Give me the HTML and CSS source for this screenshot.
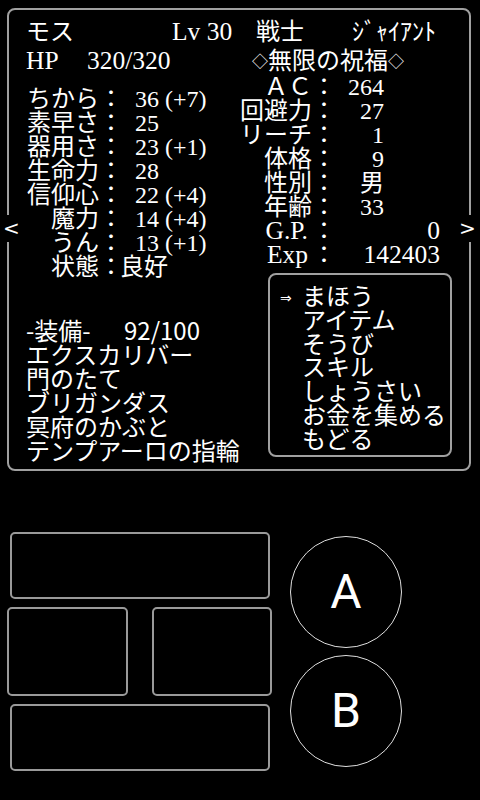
FILE: index.html
```html
<!DOCTYPE html>
<html lang="ja">
<head>
  <meta charset="UTF-8" />
  <title>ステータス</title>
  <link rel="stylesheet" href="styles.css">
</head>
<body>
  <div class="panel">
    <div class="row head1">
      <span class="name">モス</span><span class="lv big">Lv 30</span><span class="job">戦士</span><span>ｼﾞｬｲｱﾝﾄ</span>
    </div>
    <div class="row head2">
      <span class="hp-label big">HP</span><span class="hp-val big">320/320</span><span class="bless"><span class="dia">◇</span>無限の祝福<span class="dia">◇</span></span>
    </div>

    <div class="body">
      <div class="left">
        <div class="stats">
          <span class="k">ちから</span><span class="c">：</span><span class="v">36 (+7)</span>
          <span class="k">素早さ</span><span class="c">：</span><span class="v">25</span>
          <span class="k">器用さ</span><span class="c">：</span><span class="v">23 (+1)</span>
          <span class="k">生命力</span><span class="c">：</span><span class="v">28</span>
          <span class="k">信仰心</span><span class="c">：</span><span class="v">22 (+4)</span>
          <span class="k">魔力</span><span class="c">：</span><span class="v">14 (+4)</span>
          <span class="k">うん</span><span class="c">：</span><span class="v">13 (+1)</span>
          <span class="k">状態</span><span class="c">：</span><span class="v word">良好</span>
        </div>

        <div class="equip">
          <div><span class="eq-title">-装備-</span>92/100</div>
          <div>エクスカリバー</div>
          <div>門のたて</div>
          <div>ブリガンダス</div>
          <div>冥府のかぶと</div>
          <div>テンプアーロの指輪</div>
        </div>
      </div>

      <div class="right">
        <div class="rstats">
          <span class="rk">ＡＣ</span><span class="c">：</span><span class="rv">264</span>
          <span class="rk">回避力</span><span class="c">：</span><span class="rv">27</span>
          <span class="rk">リーチ</span><span class="c">：</span><span class="rv">1</span>
          <span class="rk">体格</span><span class="c">：</span><span class="rv">9</span>
          <span class="rk">性別</span><span class="c">：</span><span class="rv">男</span>
          <span class="rk">年齢</span><span class="c">：</span><span class="rv">33</span>
          <span class="rk lat big">G.P.</span><span class="c">：</span><span class="rv wide big">0</span>
          <span class="rk lat big">Exp</span><span class="c">：</span><span class="rv wide big">142403</span>
        </div>

        <ul class="menu">
          <li><span class="cur">⇒</span>まほう</li>
          <li><span class="cur"></span>アイテム</li>
          <li><span class="cur"></span>そうび</li>
          <li><span class="cur"></span>スキル</li>
          <li><span class="cur"></span>しょうさい</li>
          <li><span class="cur"></span>お金を集める</li>
          <li><span class="cur"></span>もどる</li>
        </ul>
      </div>
    </div>

    <span class="arrow prev">&lt;</span>
    <span class="arrow next">&gt;</span>
  </div>

  <div class="controls">
    <div class="dpad">
      <div class="key wide"></div>
      <div class="key"></div>
      <div class="key"></div>
      <div class="key wide"></div>
    </div>
    <div class="buttons">
      <div class="btn">A</div>
      <div class="btn">B</div>
    </div>
  </div>
</body>
</html>
```

FILE: styles.css
```css
* {
  margin: 0;
  padding: 0;
  box-sizing: border-box;
}

body {
  width: 480px;
  height: 800px;
  overflow: hidden;
  background-color: #000;
  color: #fff;
  font-family: "Liberation Serif", "Noto Sans CJK JP", serif;
  font-size: 24px;
  line-height: 24px;
}

/* ステータス窓 */
.panel {
  position: relative;
  width: 464px;
  height: 463px;
  margin: 8px 0 0 7px;
  padding: 10px 0 0 17px;
  border: 2px solid #a0a0a0;
  border-radius: 8px;
}

.row {
  display: flex;
  white-space: nowrap;
}

/* 英数字だけ少し大きめ */
.big { font-size: 25.5px; }

.name { width: 146px; }
.lv { width: 84px; }
.job { width: 96px; }

.head2 { margin-top: 5px; }
.hp-label { width: 61px; }
.hp-val { width: 165px; }

.dia {
  font-family: "Noto Sans CJK JP", sans-serif;
  font-size: 16px;
  line-height: 1;
  vertical-align: 2px;
}

.body {
  display: grid;
  grid-template-columns: 214px 1fr;
  margin-top: 2px;
}

.left { padding-top: 12px; }

.stats {
  display: grid;
  grid-template-columns: 73px 24px auto;
  white-space: nowrap;
}

.k, .rk { text-align: right; }
.c { text-align: center; }
.v { padding-left: 12px; }
.v.word { padding-left: 0; margin-left: -3px; }

.rstats {
  display: grid;
  grid-template-columns: 72px 24px 104px;
  white-space: nowrap;
}

.rk.lat { padding-right: 4px; }
.rv { text-align: right; padding-right: 56px; }
.rv.wide { padding-right: 0; }

/* 装備 */
.equip {
  margin-top: 39px;
  font-family: "Noto Sans CJK JP", sans-serif;
  white-space: nowrap;
}

.eq-title {
  display: inline-block;
  width: 98px;
}

/* コマンド */
.menu {
  list-style: none;
  width: 184px;
  height: 184px;
  margin: 6px 0 0 28px;
  padding: 8px 0 0 10px;
  border: 2px solid #a0a0a0;
  border-radius: 8px;
  font-family: "Noto Sans CJK JP", sans-serif;
  white-space: nowrap;
}

.menu li {
  display: flex;
  height: 23.8px;
}

.cur {
  width: 22px;
  font-family: "DejaVu Sans", sans-serif;
  font-size: 14px;
  line-height: 24px;
  padding-top: 3px;
}

/* ページ切替の矢印 */
.arrow {
  position: absolute;
  top: 205px;
  width: 17px;
  height: 27px;
  background-color: #000;
  font-family: "DejaVu Sans", sans-serif;
  font-size: 20px;
  line-height: 27px;
  text-align: center;
}

.prev { left: -6px; }
.next { right: -7px; }

/* 操作パッド */
.controls {
  display: flex;
  margin: 61px 0 0 7px;
}

.dpad {
  display: grid;
  grid-template-columns: 121px 120px;
  column-gap: 24px;
  row-gap: 8px;
  width: 265px;
}

.key {
  height: 89px;
  border: 2px solid #9a9a9a;
  border-radius: 5px;
}

.key.wide {
  grid-column: 1 / 3;
  height: 67px;
  margin: 0 2px 0 3px;
}

.buttons {
  display: flex;
  flex-direction: column;
  gap: 7px;
  margin: 4px 0 0 18px;
}

.btn {
  width: 112px;
  height: 112px;
  border: 1px solid #e0e0e0;
  border-radius: 50%;
  display: flex;
  align-items: center;
  justify-content: center;
  font-family: Roboto, sans-serif;
  font-size: 48px;
  line-height: 1;
}
```
